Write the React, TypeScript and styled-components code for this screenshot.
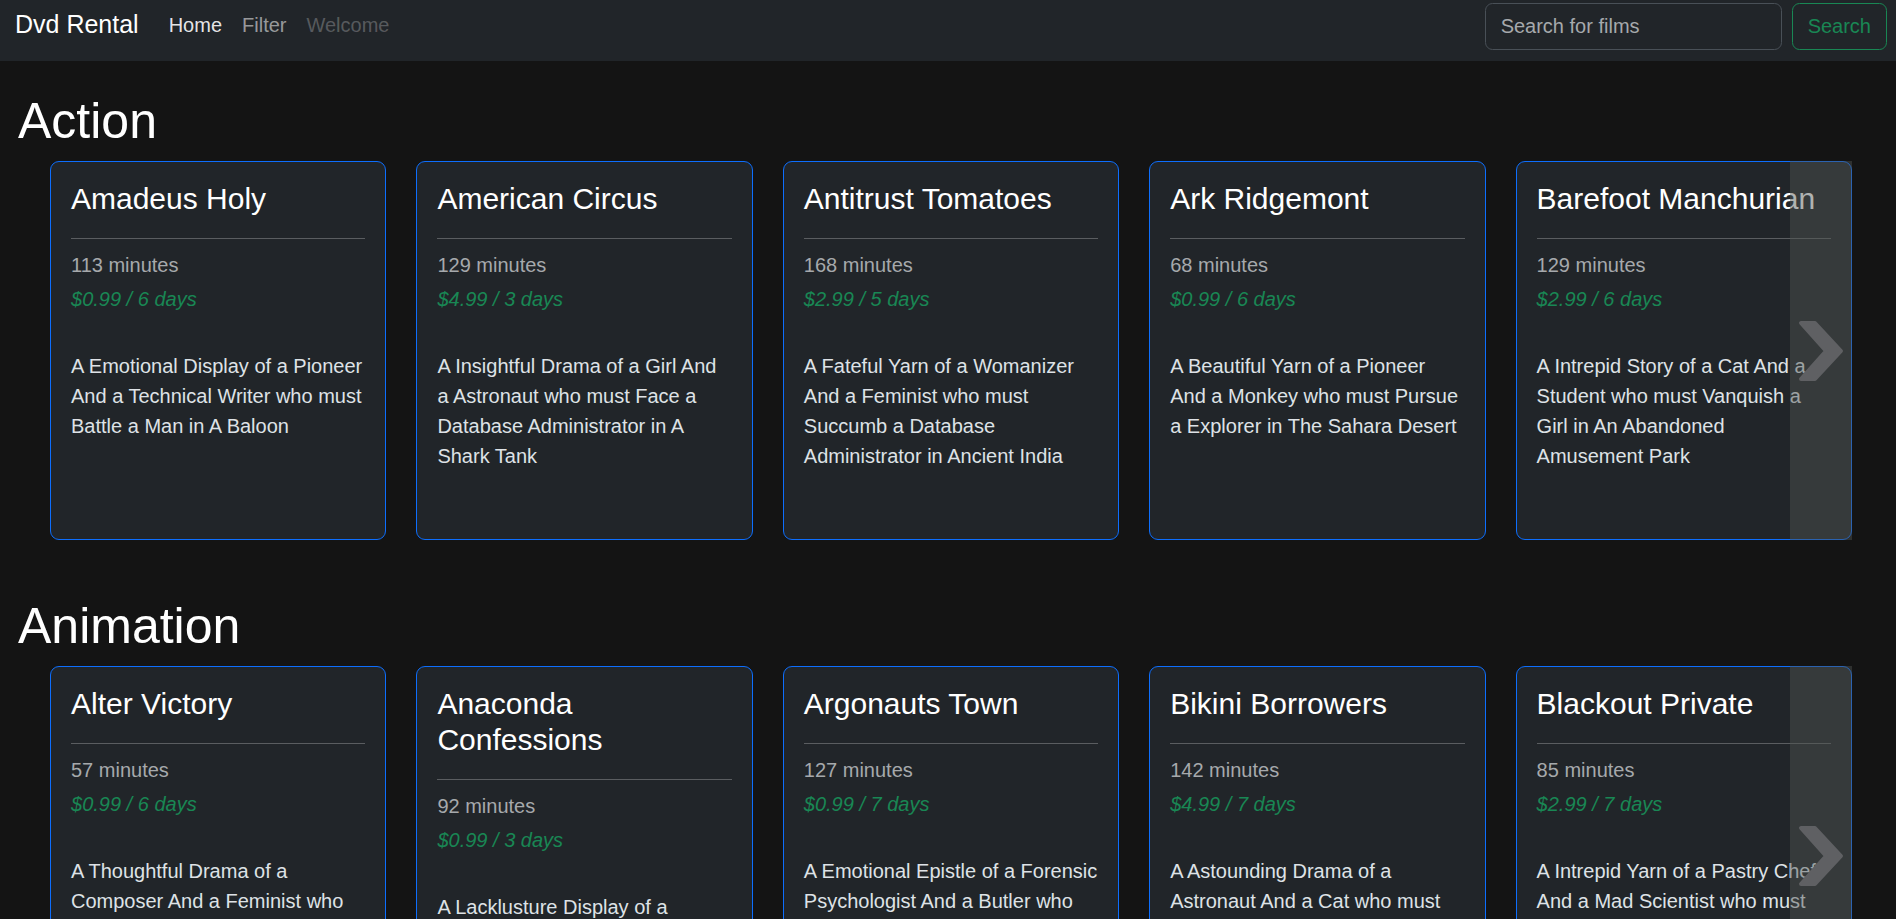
import React from "react";
import styled, { createGlobalStyle } from "styled-components";

const GlobalStyle = createGlobalStyle`
  html, body {
    margin: 0;
    padding: 0;
    background: #141414;
    color: #dee2e6;
    font-family: "Liberation Sans", Arial, sans-serif;
    font-size: 20px;
    line-height: 1.5;
  }
  * {
    box-sizing: border-box;
  }
`;

interface Film {
  title: string;
  length: number;
  rate: string;
  days: number;
  description: string;
}

interface Category {
  name: string;
  films: Film[];
}

const CATEGORIES: Category[] = [
  {
    name: "Action",
    films: [
      {
        title: "Amadeus Holy",
        length: 113,
        rate: "0.99",
        days: 6,
        description:
          "A Emotional Display of a Pioneer And a Technical Writer who must Battle a Man in A Baloon"
      },
      {
        title: "American Circus",
        length: 129,
        rate: "4.99",
        days: 3,
        description:
          "A Insightful Drama of a Girl And a Astronaut who must Face a Database Administrator in A Shark Tank"
      },
      {
        title: "Antitrust Tomatoes",
        length: 168,
        rate: "2.99",
        days: 5,
        description:
          "A Fateful Yarn of a Womanizer And a Feminist who must Succumb a Database Administrator in Ancient India"
      },
      {
        title: "Ark Ridgemont",
        length: 68,
        rate: "0.99",
        days: 6,
        description:
          "A Beautiful Yarn of a Pioneer And a Monkey who must Pursue a Explorer in The Sahara Desert"
      },
      {
        title: "Barefoot Manchurian",
        length: 129,
        rate: "2.99",
        days: 6,
        description:
          "A Intrepid Story of a Cat And a Student who must Vanquish a Girl in An Abandoned Amusement Park"
      }
    ]
  },
  {
    name: "Animation",
    films: [
      {
        title: "Alter Victory",
        length: 57,
        rate: "0.99",
        days: 6,
        description:
          "A Thoughtful Drama of a Composer And a Feminist who must Meet a Secret Agent in The Canadian Rockies"
      },
      {
        title: "Anaconda Confessions",
        length: 92,
        rate: "0.99",
        days: 3,
        description:
          "A Lacklusture Display of a Dentist And a Dentist who must Fight a Girl in Australia"
      },
      {
        title: "Argonauts Town",
        length: 127,
        rate: "0.99",
        days: 7,
        description:
          "A Emotional Epistle of a Forensic Psychologist And a Butler who must Challenge a Waitress in An Abandoned Mine Shaft"
      },
      {
        title: "Bikini Borrowers",
        length: 142,
        rate: "4.99",
        days: 7,
        description:
          "A Astounding Drama of a Astronaut And a Cat who must Discover a Woman in The First Manned Space Station"
      },
      {
        title: "Blackout Private",
        length: 85,
        rate: "2.99",
        days: 7,
        description:
          "A Intrepid Yarn of a Pastry Chef And a Mad Scientist who must Challenge a Secret Agent in Ancient Japan"
      }
    ]
  }
];

const Navbar = styled.nav`
  display: flex;
  align-items: flex-start;
  height: 61px;
  padding: 3px 9px 0 15px;
  background: #212529;
`;

const NavRow = styled.div`
  display: flex;
  align-items: center;
  width: 100%;
  height: 47px;
`;

const Brand = styled.a`
  margin: 0 20px 3px 0;
  font-size: 25px;
  line-height: 1.5;
  color: #fff;
  text-decoration: none;
`;

interface NavLinkProps {
  $state: "active" | "normal" | "disabled";
}

const NavLink = styled.a<NavLinkProps>`
  margin-bottom: 3px;
  padding: 0 10px;
  line-height: 30px;
  text-decoration: none;
  color: ${({ $state }): string =>
    $state === "active"
      ? "rgba(255, 255, 255, 0.9)"
      : $state === "disabled"
      ? "rgba(255, 255, 255, 0.25)"
      : "rgba(255, 255, 255, 0.55)"};
`;

const SearchForm = styled.form`
  display: flex;
  align-items: center;
  gap: 10px;
  margin-left: auto;
`;

const SearchInput = styled.input`
  width: 297px;
  height: 47px;
  padding: 7px 15px;
  font-family: inherit;
  font-size: 20px;
  color: #dee2e6;
  background: #212529;
  border: 1px solid #495057;
  border-radius: 7.5px;
  outline: none;
  &::placeholder {
    color: #a6a9ac;
  }
`;

const SearchButton = styled.button`
  height: 47px;
  padding: 7px 15px;
  font-family: inherit;
  font-size: 20px;
  color: #198754;
  background: transparent;
  border: 1px solid #198754;
  border-radius: 7.5px;
`;

const Section = styled.section`
  padding: 30px 18px 0;
`;

const CategoryTitle = styled.h1`
  margin: 0 0 10px;
  font-size: 50px;
  font-weight: 500;
  line-height: 1.2;
  color: #fff;
`;

const Carousel = styled.div`
  position: relative;
  display: grid;
  grid-template-columns: repeat(5, 1fr);
  gap: 30px;
  margin: 0 26px 26px 32px;
`;

const NextArrow = styled.div`
  position: absolute;
  top: 0;
  right: 0;
  bottom: 0;
  width: 62px;
  display: flex;
  align-items: center;
  justify-content: center;
  background: rgba(80, 84, 81, 0.45);
`;

const Card = styled.div`
  min-height: 379px;
  padding: 19px 20px 20px;
  background: #212529;
  border: 1px solid #0d6efd;
  border-radius: 9px;
`;

const CardTitle = styled.h4`
  margin: 0;
  font-size: 30px;
  font-weight: 500;
  line-height: 1.2;
  color: #fff;
`;

const Divider = styled.hr`
  margin: 21px 0 11px;
  border: 0;
  border-top: 1px solid #5a5d60;
`;

const Length = styled.p`
  margin: 0 0 4px;
  color: #a6a9ac;
`;

const Price = styled.p`
  margin: 0 0 37px;
  font-style: italic;
  color: #198754;
`;

const Description = styled.p`
  margin: 0;
  color: #dee2e6;
`;

function ChevronRight(): JSX.Element {
  return (
    <svg width="46" height="60" viewBox="0 0 46 60">
      <polygon
        points="3,2 17,2 43,30 17,58 3,58 28,30"
        fill="#5f6063"
        stroke="#5f6063"
        strokeWidth="4"
        strokeLinejoin="round"
      />
    </svg>
  );
}

function FilmCard({ film }: { film: Film }): JSX.Element {
  return (
    <Card>
      <CardTitle>{film.title}</CardTitle>
      <Divider />
      <Length>{film.length} minutes</Length>
      <Price>
        ${film.rate} / {film.days} days
      </Price>
      <Description>{film.description}</Description>
    </Card>
  );
}

export default function App(): JSX.Element {
  return (
    <>
      <GlobalStyle />
      <Navbar>
        <NavRow>
          <Brand href="#">Dvd Rental</Brand>
          <NavLink href="#" $state="active">
            Home
          </NavLink>
          <NavLink href="#" $state="normal">
            Filter
          </NavLink>
          <NavLink $state="disabled">Welcome</NavLink>
          <SearchForm onSubmit={(e): void => e.preventDefault()}>
            <SearchInput type="search" placeholder="Search for films" />
            <SearchButton type="submit">Search</SearchButton>
          </SearchForm>
        </NavRow>
      </Navbar>
      {CATEGORIES.map(category => (
        <Section key={category.name}>
          <CategoryTitle>{category.name}</CategoryTitle>
          <Carousel>
            {category.films.map(film => (
              <FilmCard key={film.title} film={film} />
            ))}
            <NextArrow>
              <ChevronRight />
            </NextArrow>
          </Carousel>
        </Section>
      ))}
    </>
  );
}
